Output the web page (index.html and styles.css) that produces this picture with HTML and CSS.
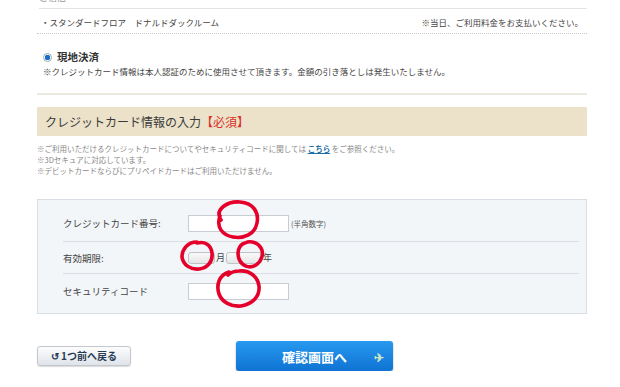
FILE: index.html
```html
<!DOCTYPE html>
<html lang="ja">
<head>
  <meta charset="UTF-8">
  <title>クレジットカード情報の入力</title>
  <link rel="stylesheet" href="styles.css">
</head>
<body>
  <div class="page">
    <p class="cut">ご宿泊</p>

    <div class="plan-row">
      <span>・スタンダードフロア　ドナルドダックルーム</span>
      <span>※当日、ご利用料金をお支払いください。</span>
    </div>

    <div class="pay">
      <label class="pay-title"><span class="radio"></span>現地決済</label>
      <p class="pay-note">※クレジットカード情報は本人認証のために使用させて頂きます。金額の引き落としは発生いたしません。</p>
    </div>

    <h2 class="section-head">クレジットカード情報の入力<span class="req">【必須】</span></h2>

    <ul class="notes">
      <li>※ご利用いただけるクレジットカードについてやセキュリティコードに関しては <a href="#">こちら</a> をご参照ください。</li>
      <li>※3Dセキュアに対応しています。</li>
      <li>※デビットカードならびにプリペイドカードはご利用いただけません。</li>
    </ul>

    <div class="card-form">
      <div class="form-row">
        <span class="label">クレジットカード番号:</span>
        <input type="text" class="field">
        <span class="hint">(半角数字)</span>
      </div>
      <div class="form-row">
        <span class="label">有効期限:</span>
        <select class="mini"></select><span class="unit">月</span>
        <select class="mini wide"></select><span class="unit">年</span>
      </div>
      <div class="form-row">
        <span class="label">セキュリティコード</span>
        <input type="text" class="field">
      </div>

      <!-- 手書きの赤丸 -->
      <svg class="marks" width="620" height="140" viewBox="0 0 620 140">
        <g fill="none" stroke="#e4002b" stroke-width="3.6" stroke-linecap="round">
          <path d="M220 20 C213 9 227 1 239 2 C253 3 258 13 256 23 C254 34 243 39 232 37 C221 35 215 27 219 16"/>
          <path d="M196 42 C186 42 181 50 181 57 C182 65 190 70 198 69 C207 68 212 61 211 53 C210 45 204 41 196 43"/>
          <path d="M244 43 C237 45 236 53 238 59 C241 66 248 69 255 65 C261 61 263 53 260 48 C257 43 250 40 244 43"/>
          <path d="M228 72 C218 75 215 85 218 94 C221 102 230 107 240 106 C252 104 259 96 258 86 C257 77 249 70 238 71 C232 71 229 73 227 75"/>
        </g>
      </svg>
    </div>

    <div class="actions">
      <button class="back-btn"><span class="back-ico">↺</span>1つ前へ戻る</button>
      <button class="next-btn">確認画面へ<span class="next-ico">✈</span></button>
    </div>
  </div>
</body>
</html>
```

FILE: styles.css
```css
* {
  box-sizing: border-box;
}

body {
  margin: 0;
  background: #fff;
  color: #333;
  font-family: "Noto Sans CJK JP", "Noto Sans", sans-serif;
  font-size: 9px;
}

.page {
  padding: 0 33px 0 37px;
}

.cut {
  margin: -9px 0 0 2px;
  height: 18px;
  line-height: 14px;
  color: #999;
  font-size: 9px;
  border-bottom: 1px solid #e3e3e3;
}

.plan-row {
  display: flex;
  justify-content: space-between;
  height: 25px;
  padding: 7px 4px 0 4px;
  line-height: 12px;
  font-size: 8.5px;
  color: #444;
  border-bottom: 1px dotted #c9c9c9;
}

.pay {
  padding: 16px 0 0 6px;
  height: 61px;
  border-bottom: 2px solid #ebe8dd;
}

.pay-title {
  display: flex;
  align-items: center;
  font-weight: bold;
  font-size: 10.5px;
  line-height: 14px;
  color: #333;
}

.radio {
  width: 9px;
  height: 9px;
  margin-right: 5px;
  border-radius: 50%;
  border: 1px solid #9aa;
  background: radial-gradient(circle, #1a6ec8 0 2.5px, #fff 3px);
}

.pay-note {
  margin: 1px 0 0;
  font-size: 8.5px;
  line-height: 12px;
  color: #444;
}

.section-head {
  margin: 12px 0 0;
  height: 29px;
  padding: 0 8px;
  background: #ebe2c9;
  font-size: 12px;
  font-weight: normal;
  line-height: 29px;
  color: #3a3a3a;
}

.req {
  color: #d8322a;
}

.notes {
  list-style: none;
  margin: 7px 0 0;
  padding: 0;
  font-size: 7.5px;
  line-height: 11px;
  color: #888;
}

.notes a {
  color: #1f6fa6;
  font-weight: bold;
  text-decoration: underline;
}

.card-form {
  position: relative;
  margin: 23px 0 0;
  padding: 5px 7px 5px 25px;
  background: #f3f6f9;
  border: 1px solid #d9dee4;
}

.form-row {
  display: flex;
  align-items: center;
  height: 32px;
  border-bottom: 1px solid #d9dee4;
}

.form-row:first-child {
  height: 37px;
}

.form-row:last-of-type {
  border-bottom: none;
  height: 34px;
}

.label {
  width: 125px;
  font-size: 9.5px;
  color: #444;
}

.field {
  width: 101px;
  height: 17px;
  margin: 0;
  border: 1px solid #c8cdd3;
  background: #fff;
}

.hint {
  margin-left: 2px;
  font-size: 7.5px;
  color: #555;
}

.mini {
  width: 27px;
  height: 12px;
  margin: 0;
  padding: 0;
  border: 1px solid #bfc3c8;
  border-radius: 3px;
  background: linear-gradient(#fafafa, #e6e6e6);
  appearance: none;
}

.mini.wide {
  width: 36px;
}

.unit {
  margin: 0 1px;
  font-size: 9px;
  color: #444;
}

.marks {
  position: absolute;
  left: -37px;
  top: 0;
  pointer-events: none;
}

.actions {
  display: flex;
  align-items: center;
  height: 30px;
  margin-top: 27px;
}

.back-btn {
  width: 94px;
  height: 20px;
  padding: 0;
  border: 1px solid #c3c8ce;
  border-radius: 3px;
  background: linear-gradient(#fdfdfd, #dfe4ea);
  box-shadow: 0 1px 1px rgba(0, 0, 0, 0.15);
  font-family: inherit;
  font-size: 10px;
  font-weight: bold;
  color: #2a3c55;
  line-height: 18px;
}

.back-ico {
  margin-right: 2px;
  font-size: 10px;
}

.next-btn {
  position: relative;
  width: 157px;
  height: 30px;
  margin-left: 105px;
  border: none;
  border-radius: 3px;
  background: linear-gradient(#2799f0, #0f73d2);
  box-shadow: 0 1px 2px rgba(0, 0, 0, 0.35);
  font-family: inherit;
  font-size: 13px;
  font-weight: bold;
  color: #fff;
}

.next-ico {
  position: absolute;
  right: 9px;
  top: 7px;
  font-size: 12px;
  color: #cfe6c4;
}
```
